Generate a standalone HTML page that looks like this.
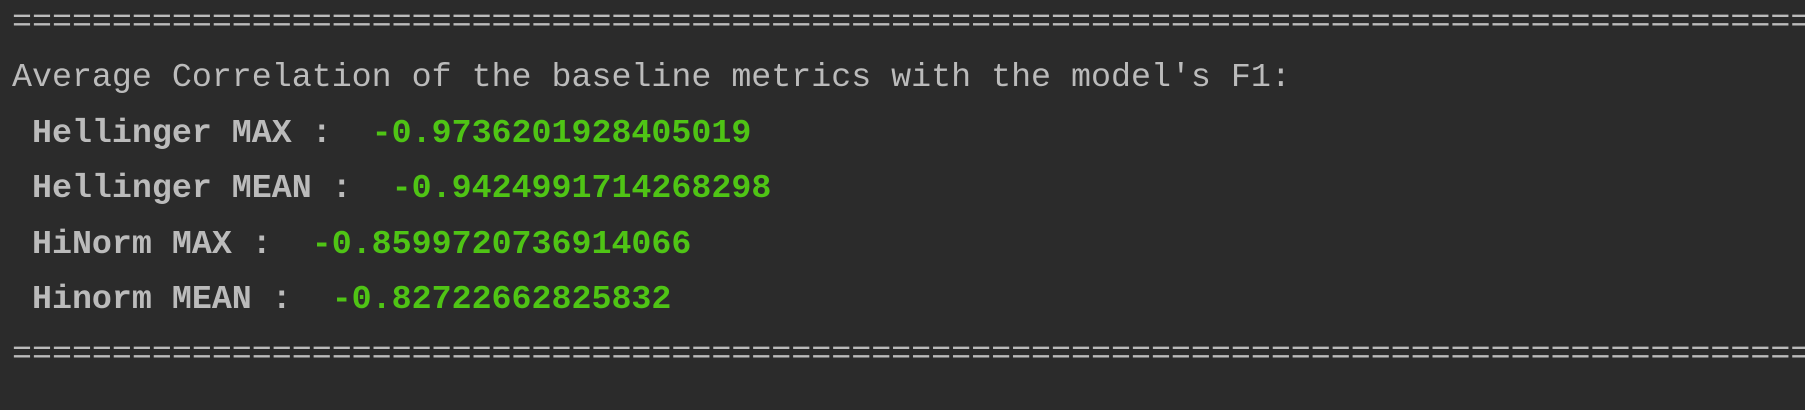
<!DOCTYPE html>
<html><head><style>
html,body{margin:0;padding:0;background:#2b2b2b;width:1805px;height:410px;overflow:hidden}
pre{position:absolute;left:12px;top:-5px;margin:0;font-family:"Liberation Mono",monospace;font-size:33.3px;line-height:55.4px;color:#bbbbbb;white-space:pre}
b{font-weight:bold}
.g{color:#4fc415;font-weight:bold}
</style></head><body>
<pre>============================================================================================
Average Correlation of the baseline metrics with the model's F1:
<b> Hellinger MAX :  </b><span class="g">-0.9736201928405019</span>
<b> Hellinger MEAN :  </b><span class="g">-0.9424991714268298</span>
<b> HiNorm MAX :  </b><span class="g">-0.8599720736914066</span>
<b> Hinorm MEAN :  </b><span class="g">-0.82722662825832</span>
============================================================================================</pre>
</body></html>
